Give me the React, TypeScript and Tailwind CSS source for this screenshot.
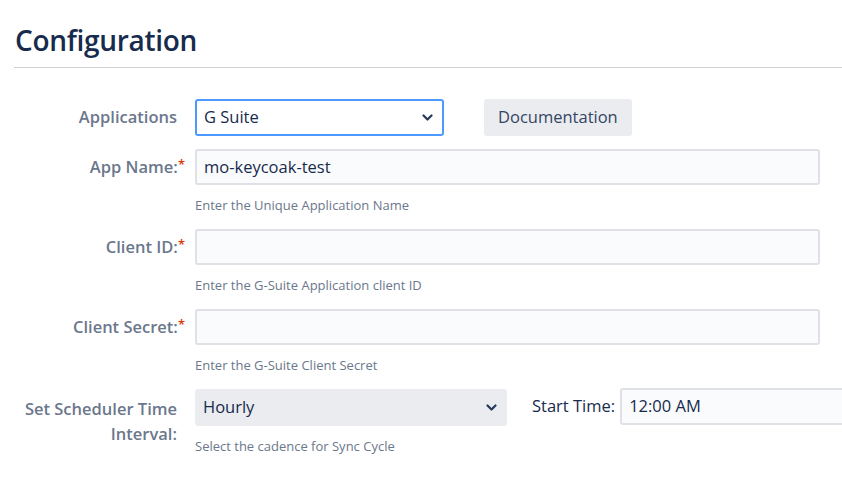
import React from 'react';

const font = { fontFamily: '"Open Sans", "Noto Sans", sans-serif' };

const Chevron: React.FC = () => (
  <svg width="11" height="7" viewBox="0 0 11 7" className="shrink-0">
    <path d="M1.5 1.5l4 4 4-4" fill="none" stroke="#253858" strokeWidth="2.2" strokeLinecap="round" strokeLinejoin="round" />
  </svg>
);

const Label: React.FC<{ text: string; required?: boolean }> = ({ text, required }) => (
  <div className={`w-[171px] shrink-0 text-right text-[16.5px] font-semibold text-[#6b778c] whitespace-nowrap ${required ? '' : 'pr-2'}`}>
    {text}
    {required && <span className="text-[#de350b] align-top text-[13px]">*</span>}
  </div>
);

const Help: React.FC<{ text: string; last?: boolean }> = ({ text, last }) => (
  <div className={`ml-[181px] mt-[11px] ${last ? '' : 'mb-[15px]'} text-[13px] leading-[18px] text-[#6b778c]`}>{text}</div>
);

const TextField: React.FC<{ value?: string; className?: string }> = ({ value = '', className = '' }) => (
  <div className={`h-[36px] shrink-0 flex items-center px-[7px] bg-[#fafbfc] border-2 border-[#dfe1e6] rounded-[3px] text-[16.5px] text-[#172b4d] ${className}`}>
    {value}
  </div>
);

export default function App() {
  return (
    <div className="min-h-screen overflow-hidden bg-white pl-[14px] pt-[22px]" style={font}>
      <h1 className="text-[28px] leading-[36px] font-semibold tracking-[-0.3px] text-[#172b4d] pl-px">Configuration</h1>
      <div className="mt-[9px] border-b border-[#cfd1d6]" />

      <div className="mt-[31px]">
        <div className="flex items-center gap-[10px]">
          <Label text="Applications" />
          <div className="w-[249px] h-[37px] shrink-0 flex items-center justify-between pl-[7px] pr-[9px] bg-white border-2 border-[#4c9aff] rounded-[3px] text-[16.5px] text-[#172b4d]">
            <span>G Suite</span>
            <Chevron />
          </div>
          <button className="ml-[30px] h-[37px] px-[14px] shrink-0 bg-[#ebecf0] rounded-[3px] text-[16.5px] text-[#344563]">
            Documentation
          </button>
        </div>

        <div className="flex items-center gap-[10px] mt-[13px]">
          <Label text="App Name:" required />
          <TextField value="mo-keycoak-test" className="w-[625px]" />
        </div>
        <Help text="Enter the Unique Application Name" />

        <div className="flex items-center gap-[10px]">
          <Label text="Client ID:" required />
          <TextField className="w-[625px]" />
        </div>
        <Help text="Enter the G-Suite Application client ID" />

        <div className="flex items-center gap-[10px]">
          <Label text="Client Secret:" required />
          <TextField className="w-[625px]" />
        </div>
        <Help text="Enter the G-Suite Client Secret" />

        <div className="flex items-start gap-[10px] h-[37px]">
          <div className="w-[171px] shrink-0 pt-[7px] pr-2 text-right text-[16.5px] leading-[25px] font-semibold text-[#6b778c]">
            Set Scheduler Time Interval:
          </div>
          <div className="w-[312px] h-[37px] shrink-0 flex items-center justify-between pl-[8px] pr-[10px] bg-[#ebecf0] rounded-[3px] text-[16.5px] text-[#172b4d]">
            <span>Hourly</span>
            <Chevron />
          </div>
          <div className="ml-[15px] h-[37px] shrink-0 flex items-center gap-[5px] -mt-px">
            <span className="text-[16.5px] text-[#172b4d] whitespace-nowrap">Start Time:</span>
            <TextField value="12:00 AM" className="w-[240px] h-[37px]" />
          </div>
        </div>
        <Help text="Select the cadence for Sync Cycle" last />
      </div>
    </div>
  );
}
